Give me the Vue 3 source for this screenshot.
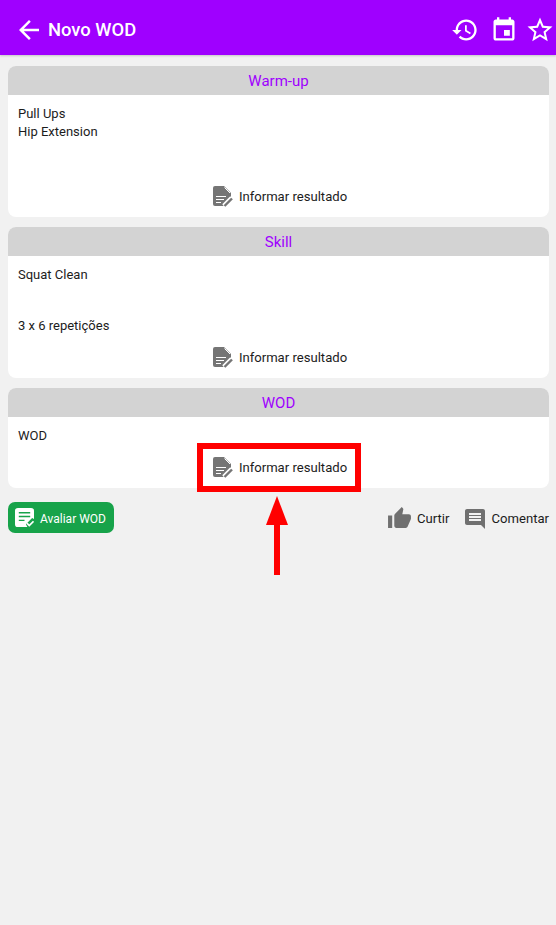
<template>
  <div class="page">
    <header class="topbar">
      <svg class="back" viewBox="0 0 24 24"><path :d="icons.back" /></svg>
      <span class="title">Novo WOD</span>
      <div class="actions">
        <svg class="hist" viewBox="0 0 24 24"><path :d="icons.history" /></svg>
        <svg class="cal" viewBox="0 0 24 24"><path :d="icons.event" /></svg>
        <svg class="star" viewBox="0 0 24 24"><path :d="icons.star" /></svg>
      </div>
    </header>

    <main class="list">
      <section v-for="block in blocks" :key="block.name" class="card">
        <h2 class="card-head">{{ block.name }}</h2>
        <div class="card-body">
          <div class="lines" :class="block.cls">
            <div v-for="(line, i) in block.lines" :key="i" class="line">{{ line }}</div>
          </div>
          <div class="result">
            <svg class="doc" viewBox="0 0 20 21">
              <path d="M2 0h9l7 7v5l-8 8H2a2 2 0 0 1-2-2V2a2 2 0 0 1 2-2z" />
              <path class="doc-fold" d="M11.500 1.500l5.500 5.500" />
              <path class="doc-line" d="M3 10.500h10M3 13.500h8M3 16.500h5" />
              <path class="pencil-gap" d="M19 12l-8 8" />
              <path class="pencil" d="M19 12.500l-7.500 7.500" />
            </svg>
            <span>Informar resultado</span>
          </div>
        </div>
      </section>

      <div class="footer">
        <button class="rate">
          <svg class="rate-icon" viewBox="0 0 20 20">
            <path d="M3 0h14a3 3 0 0 1 3 3v8.500l-2-1-6.500 6.500 1.500 3H3a3 3 0 0 1-3-3V3a3 3 0 0 1 3-3z" />
            <path class="rate-line" d="M4 5h12M4 9h12M4 13h6" />
            <path class="rate-check" d="M12.500 16l2.500 2.500 4.500-4.500" />
          </svg>
          <span>Avaliar WOD</span>
        </button>
        <div class="social">
          <div class="social-item">
            <svg class="thumb" viewBox="0 0 24 24"><path :d="icons.thumb" /></svg>
            <span>Curtir</span>
          </div>
          <div class="social-item">
            <svg class="comment" viewBox="0 0 24 24"><path :d="icons.comment" /></svg>
            <span>Comentar</span>
          </div>
        </div>
      </div>
    </main>

    <div class="highlight"></div>
    <div class="arrow"></div>
  </div>
</template>

<script setup>
const icons = {
  back: 'M20 11H7.830l5.590-5.590L12 4l-8 8 8 8 1.410-1.410L7.830 13H20v-2z',
  history: 'M13 3c-4.970 0-9 4.030-9 9H1l3.890 3.890.070.140L9 12H6c0-3.870 3.130-7 7-7s7 3.130 7 7-3.130 7-7 7c-1.930 0-3.680-.790-4.940-2.060l-1.420 1.420C8.270 19.990 10.510 21 13 21c4.970 0 9-4.030 9-9s-4.030-9-9-9zm-1 5v5l4.280 2.540.720-1.210-3.500-2.080V8H12z',
  event: 'M17 12h-5v5h5v-5zM16 1v2H8V1H6v2H5c-1.110 0-1.990.900-1.990 2L3 19c0 1.100.890 2 2 2h14c1.100 0 2-.900 2-2V5c0-1.100-.900-2-2-2h-1V1h-2zm3 18H5V8h14v11z',
  star: 'M22 9.240l-7.190-.620L12 2 9.190 8.630 2 9.240l5.460 4.730L5.820 21 12 17.270 18.180 21l-1.630-7.030L22 9.240zM12 15.400l-3.760 2.270 1-4.280-3.320-2.880 4.380-.380L12 6.100l1.710 4.040 4.380.380-3.320 2.880 1 4.280L12 15.400z',
  thumb: 'M1 21h4V9H1v12zm22-11c0-1.100-.900-2-2-2h-6.310l.950-4.570.030-.320c0-.410-.170-.790-.440-1.060L14.170 1 7.590 7.590C7.220 7.950 7 8.450 7 9v10c0 1.100.900 2 2 2h9c.830 0 1.540-.500 1.840-1.220l3.020-7.050c.090-.230.140-.470.140-.730v-2z',
  comment: 'M21.990 4c0-1.100-.890-2-1.990-2H4c-1.100 0-2 .900-2 2v12c0 1.100.900 2 2 2h14l4 4-.010-18zM18 14H6v-2h12v2zm0-3H6V9h12v2zm0-3H6V6h12v2z',
}

const blocks = [
  { name: 'Warm-up', cls: 'tall loose', lines: ['Pull Ups', 'Hip Extension'] },
  { name: 'Skill', cls: 'tall', lines: ['Squat Clean', '\u00a0', '\u00a0', '3 x 6 repetições'] },
  { name: 'WOD', cls: '', lines: ['WOD'] },
]
</script>

<style>
html, body { margin: 0; background: #f1f1f1; }
</style>

<style scoped>
.page {
  position: relative;
  width: 556px;
  height: 925px;
  overflow: hidden;
  background: #f1f1f1;
  font-family: Roboto, "Liberation Sans", sans-serif;
  color: #1c1c1c;
}
.topbar {
  display: flex;
  align-items: center;
  height: 55px;
  padding: 4px 0 0 14px;
  background: #9f00ff;
  color: #fff;
  box-shadow: 0 1px 2px rgba(0, 0, 0, .18);
  box-sizing: border-box;
}
.topbar svg { fill: #fff; display: block; }
.back { width: 30px; height: 30px; }
.title { margin-left: 4px; font-size: 18.400px; font-weight: 500; }
.actions { margin-left: auto; display: flex; align-items: center; }
.hist { width: 28px; height: 28px; }
.cal { width: 28px; height: 28px; margin-left: 11px; }
.star { width: 30px; height: 30px; margin-left: 7px; margin-right: 1px; }

.list {
  display: flex;
  flex-direction: column;
  gap: 10px;
  padding: 11px 7px 0 8px;
}
.card {
  background: #fff;
  border-radius: 8px;
  overflow: hidden;
}
.card-head {
  margin: 0;
  height: 29px;
  line-height: 30px;
  background: #d3d3d3;
  color: #9f00ff;
  font-size: 15px;
  font-weight: 400;
  text-align: center;
}
.card-body { padding: 10px 10px 10px; }
.lines { font-size: 13px; line-height: 17px; min-height: 17px; margin-bottom: 12px; }
.lines.tall { height: 69px; margin-bottom: 11px; }
.lines.loose { line-height: 18px; }
.result {
  display: flex;
  align-items: center;
  justify-content: center;
  gap: 6px;
  height: 22px;
  padding-left: 3px;
  font-size: 13.100px;
}
.doc { width: 20px; height: 21px; fill: #757575; }
.doc path { stroke-linecap: butt; }
.doc-fold { fill: none; stroke: #fff; stroke-width: 1; }
.doc-line { fill: none; stroke: #fff; stroke-width: 1.200; }
.pencil-gap { fill: none; stroke: #fff; stroke-width: 5; }
.pencil { fill: none; stroke: #757575; stroke-width: 2.400; }

.footer {
  display: flex;
  align-items: center;
  justify-content: space-between;
  height: 31px;
  margin-top: 4px;
}
.rate {
  display: flex;
  align-items: center;
  gap: 6px;
  width: 106px;
  height: 31px;
  padding: 0 0 0 7px;
  border: 0;
  border-radius: 7px;
  background: #17a34a;
  color: #fff;
  font-family: inherit;
  font-size: 12px;
}
.rate span { margin-top: 2px; }
.rate-icon { width: 19px; height: 19px; flex: none; fill: #fff; }
.rate-line { fill: none; stroke: #17a34a; stroke-width: 1.500; }
.rate-check { fill: none; stroke: #fff; stroke-width: 1.800; }
.social { display: flex; align-items: center; gap: 13px; padding-top: 2px; }
.social-item { display: flex; align-items: center; gap: 5px; font-size: 13.100px; }
.social-item svg { fill: #707070; display: block; }
.thumb { width: 25px; height: 25px; }
.comment { width: 24px; height: 24px; }

.highlight {
  position: absolute;
  left: 197px;
  top: 443px;
  width: 164px;
  height: 49px;
  box-sizing: border-box;
  border: 6px solid #ff0000;
}
.arrow {
  position: absolute;
  left: 274px;
  top: 525px;
  width: 6px;
  height: 50px;
  background: #ff0000;
}
.arrow::before {
  content: '';
  position: absolute;
  left: -8px;
  top: -29px;
  border-left: 11px solid transparent;
  border-right: 11px solid transparent;
  border-bottom: 29px solid #ff0000;
}
</style>
